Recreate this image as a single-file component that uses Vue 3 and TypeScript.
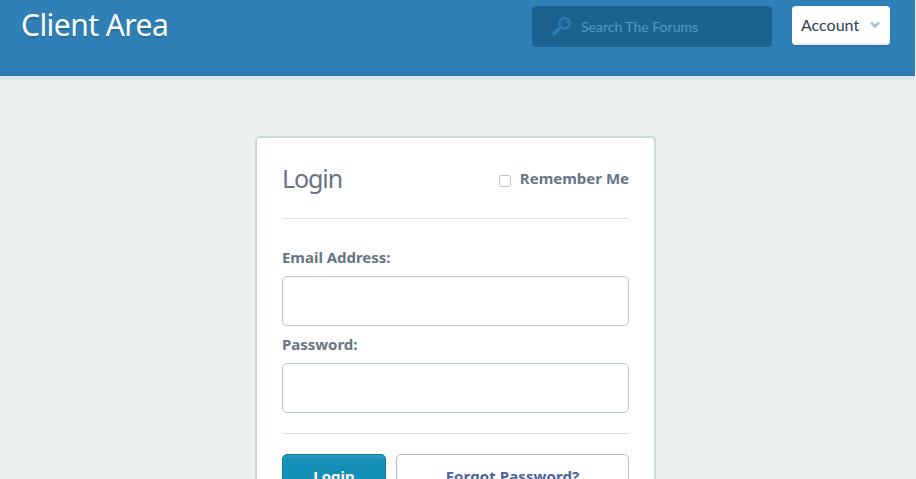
<script setup lang="ts">
import { ref } from 'vue'

const search = ref('')
const email = ref('')
const password = ref('')
const remember = ref(false)
</script>

<template>
  <div class="page">
    <header class="header">
      <h1 class="title">Client Area</h1>
      <div class="search">
        <svg class="search-icon" width="19" height="19" viewBox="0 0 19 19">
          <circle cx="12.6" cy="6.3" r="5.2" fill="none" stroke="#2f80b7" stroke-width="2" />
          <path d="M13 3.6a2.8 2.8 0 0 1 2.2 2.2" fill="none" stroke="#2f80b7" stroke-width="1.5" />
          <path d="M8.8 10.2 7 12" stroke="#2f80b7" stroke-width="1.6" />
          <path d="M6.4 12.4 1.8 16.8" stroke="#2f80b7" stroke-width="3" stroke-linecap="round" />
        </svg>
        <input v-model="search" class="search-input" type="text" placeholder="Search The Forums" />
      </div>
      <button class="account" type="button">
        <span>Account</span>
        <svg width="10" height="8" viewBox="0 0 10 8">
          <path d="M1 1.6 5 5.4 9 1.6" fill="none" stroke="#a9c3ce" stroke-width="2.8" />
        </svg>
      </button>
    </header>

    <form class="card" @submit.prevent>
      <div class="card-head">
        <h2 class="card-title">Login</h2>
        <label class="remember">
          <input v-model="remember" class="check" type="checkbox" />
          <span>Remember Me</span>
        </label>
      </div>
      <div class="fields">
        <label class="label" for="email">Email Address:</label>
        <input id="email" v-model="email" class="field" type="email" />
        <label class="label" for="password">Password:</label>
        <input id="password" v-model="password" class="field" type="password" />
      </div>
      <div class="actions">
        <button class="btn primary" type="submit">Login</button>
        <button class="btn secondary" type="button">Forgot Password?</button>
      </div>
    </form>
  </div>
</template>

<style>
body {
  background: #ebeff0;
}
</style>

<style scoped>
.page {
  height: 479px;
  overflow: hidden;
  background: #ebeff0;
  font-family: 'Noto Sans', sans-serif;
}
.page * {
  box-sizing: border-box;
}
.header {
  display: flex;
  align-items: flex-start;
  height: 76px;
  margin-right: 1px;
  padding: 6px 25px 0 21px;
  background: #2f80b7;
  box-shadow: inset 0 -4px 0 #2d7ab0, 0 4px 0 #e2e5e8;
}
.title {
  margin: -4px auto 0 0;
  font-size: 30px;
  font-weight: 400;
  line-height: 46px;
  letter-spacing: -0.55px;
  color: #fff;
  text-shadow: 0 2px 1px rgba(0, 0, 0, 0.16);
}
.search {
  display: flex;
  align-items: center;
  width: 240px;
  height: 41px;
  margin-right: 20px;
  padding-left: 20px;
  border-radius: 4px;
  background: #1c6291;
}
.search-icon {
  flex: none;
  margin-right: 10px;
}
.search-input {
  width: 170px;
  padding: 0;
  border: 0;
  outline: 0;
  background: transparent;
  font: 400 14px/20px Lato, sans-serif;
  color: #5299c8;
}
.search-input::placeholder {
  color: #5299c8;
  opacity: 1;
}
.account {
  display: flex;
  align-items: center;
  justify-content: space-between;
  width: 98px;
  height: 39px;
  padding: 0 10px 1px 9px;
  border: 0;
  border-radius: 4px;
  background: #fff;
  box-shadow: inset 0 -2px 0 #e9edef, 0 2px 2px rgba(0, 0, 0, 0.12);
  font: 400 16px/20px Lato, sans-serif;
  color: #2c3e50;
}
.card {
  width: 401px;
  height: 400px;
  margin: 60px 0 0 255px;
  padding: 0 25px;
  border: 2px solid #cbd8dc;
  border-radius: 5px;
  background: #fff;
  color: #677584;
}
.card-head {
  display: flex;
  align-items: center;
  justify-content: space-between;
  height: 81px;
  border-bottom: 1px solid #dde0e1;
}
.card-title {
  margin: 0;
  font-size: 25px;
  font-weight: 400;
  line-height: 36px;
  letter-spacing: -1.1px;
}
.remember {
  display: flex;
  align-items: center;
  gap: 9px;
  font-size: 15px;
  font-weight: 700;
  line-height: 20px;
}
.check {
  appearance: none;
  width: 12px;
  height: 12px;
  margin: 5px 0 0;
  border: 1px solid #b9bfc4;
  border-radius: 2.5px;
  background: #fff;
}
.fields {
  display: flex;
  flex-direction: column;
  height: 215px;
  padding-top: 20px;
  border-bottom: 1px solid #d8dcde;
}
.label {
  height: 37px;
  padding-top: 7px;
  font-size: 15px;
  font-weight: 700;
  line-height: 22px;
  letter-spacing: -0.03px;
}
.field {
  width: 100%;
  height: 50px;
  padding: 0 12px;
  border: 1px solid #b7c7d0;
  border-radius: 5px;
  background: #fff;
  box-shadow: inset 0 2px 1px #f6f8f9;
  outline: 0;
}
.actions {
  display: flex;
  gap: 10px;
  padding-top: 20px;
}
.btn {
  height: 50px;
  padding: 0 0 6px;
  border-radius: 5px;
  font: 700 15px/22px 'Noto Sans', sans-serif;
}
.primary {
  width: 104px;
  border: 1px solid #0d7b9b;
  background: #158fb5;
  box-shadow: inset 0 4px 2px #2799bf;
  color: #fff;
}
.secondary {
  flex: 1;
  border: 1px solid #afbcc5;
  background: #fff;
  color: #48639c;
  letter-spacing: 0.1px;
}
</style>
